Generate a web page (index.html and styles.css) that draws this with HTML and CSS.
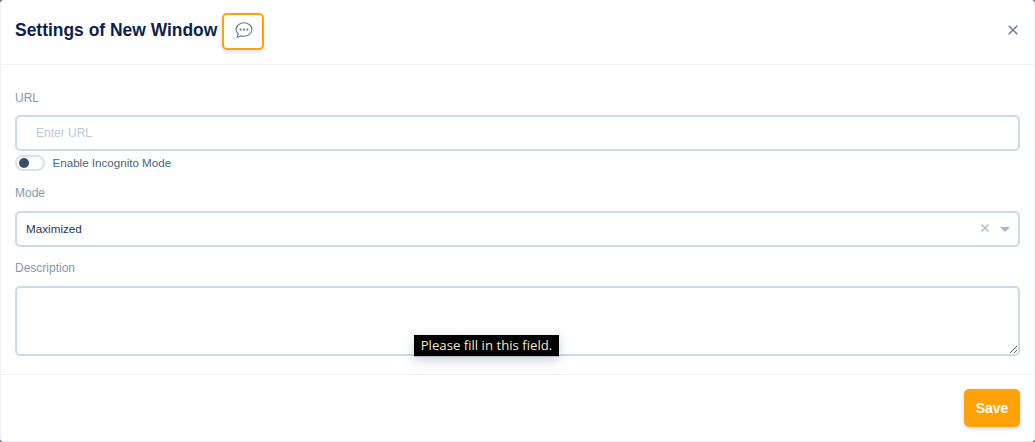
FILE: index.html
```html
<!DOCTYPE html>
<html lang="en">
<head>
  <meta charset="UTF-8">
  <title>Settings of New Window</title>
  <link rel="stylesheet" href="styles.css">
</head>
<body>
  <div class="modal">
    <div class="modal-header">
      <h2 class="modal-title">Settings of New Window</h2>
      <button class="help-button" type="button" aria-label="Comments">
        <svg width="18" height="18" viewBox="0 0 16 16" fill="none">
          <path d="M8 1.600c3.800 0 7 2.600 7 6s-3.200 6-7 6c-.9 0-1.700-.1-2.500-.4L2 14.400l.9-3.100C1.700 10.200 1 9 1 7.600c0-3.400 3.200-6 7-6z" stroke="#5f7f9c" stroke-width="1"/>
          <circle cx="5" cy="7.600" r="1" fill="#5f7f9c"/>
          <circle cx="8" cy="7.600" r="1" fill="#5f7f9c"/>
          <circle cx="11" cy="7.600" r="1" fill="#5f7f9c"/>
        </svg>
      </button>
      <button class="close-button" type="button" aria-label="Close">
        <svg width="10" height="10" viewBox="0 0 10 10">
          <path d="M.7.7l8.600 8.600M9.300.7L.7 9.300" stroke="#66809b" stroke-width="1.500"/>
        </svg>
      </button>
    </div>

    <div class="modal-body">
      <label class="field-label label-url">URL</label>
      <input class="text-input" type="text" placeholder="Enter URL">

      <div class="toggle-row">
        <span class="toggle"><span class="toggle-knob"></span></span>
        <span class="toggle-label">Enable Incognito Mode</span>
      </div>

      <label class="field-label label-mode">Mode</label>
      <div class="select-box">
        <span class="select-value">Maximized</span>
        <svg class="select-clear" width="8" height="8" viewBox="0 0 8 8">
          <path d="M.5.5l7 7M7.500.5l-7 7" stroke="#a5b8c9" stroke-width="1.200"/>
        </svg>
        <span class="select-caret"></span>
      </div>

      <label class="field-label label-desc">Description</label>
      <textarea class="text-area"></textarea>
    </div>

    <div class="modal-footer">
      <button class="save-button" type="button">Save</button>
    </div>

    <div class="native-tooltip">Please fill in this field.</div>
  </div>
</body>
</html>
```

FILE: styles.css
```css
:root {
  --navy: #0d1f4c;
  --muted: #829ab1;
  --text: #486581;
  --border: #c9dcea;
  --line: #eef2f7;
  --orange: #ffa20a;
}

html, body {
  margin: 0;
  height: 442px;
  overflow: hidden;
  background: #5b6b80;
}

body {
  font-family: "Liberation Sans", Arial, sans-serif;
  font-size: 12px;
  color: var(--navy);
}

.modal {
  position: relative;
  height: 442px;
  box-sizing: border-box;
  background: #fff;
  border-left: 1px solid #eef2f7;
  border-right: 1px solid #eef2f7;
  border-bottom: 1px solid #e6ebf2;
  border-radius: 4px;
}

.modal-header {
  display: flex;
  align-items: center;
  height: 65px;
  box-sizing: border-box;
  padding: 0 16px 2px 14px;
  border-bottom: 1px solid var(--line);
}

.modal-title {
  margin: -2px 0 0;
  font-size: 17.450px;
  font-weight: 700;
  color: var(--navy);
}

.help-button {
  display: flex;
  align-items: center;
  justify-content: center;
  width: 42px;
  height: 37px;
  margin-left: 5px;
  padding: 0 0 2px 1px;
  background: #fff;
  border: 2px solid var(--orange);
  border-radius: 5px;
  box-shadow: 0 2px 5px rgba(72, 101, 129, 0.2);
}

.close-button {
  display: flex;
  margin-left: auto;
  margin-top: -2px;
  padding: 0;
  background: none;
  border: none;
}

.modal-body {
  display: flex;
  flex-direction: column;
  height: 310px;
  box-sizing: border-box;
  padding: 0 14px;
  border-bottom: 1px solid var(--line);
}

.field-label {
  display: block;
  font-size: 12px;
  line-height: 14px;
  color: var(--muted);
}

.label-url {
  margin-top: 26px;
  margin-bottom: 10px;
}

.label-mode {
  margin-top: 15px;
  margin-bottom: 11px;
}

.label-desc {
  margin-top: 14px;
  margin-bottom: 11px;
}

.text-input {
  height: 36px;
  box-sizing: border-box;
  padding: 0 19px;
  font-family: inherit;
  font-size: 12px;
  background: #fff;
  border: 2px solid var(--border);
  border-radius: 5px;
  outline: none;
}

.text-input::placeholder {
  color: #bccbd9;
  opacity: 1;
}

.toggle-row {
  display: flex;
  align-items: center;
  gap: 7.500px;
  height: 16px;
  margin-top: 4px;
}

.toggle {
  display: flex;
  align-items: center;
  width: 30px;
  height: 16px;
  box-sizing: border-box;
  padding-left: 2px;
  border: 2px solid #d5e3ee;
  border-radius: 8px;
}

.toggle-knob {
  width: 10px;
  height: 10px;
  border-radius: 50%;
  background: #3e4c6a;
}

.toggle-label {
  margin-top: -1px;
  font-size: 11.600px;
  color: var(--text);
}

.select-box {
  display: flex;
  align-items: center;
  height: 36px;
  box-sizing: border-box;
  padding: 0 8px 0 9px;
  background: #fff;
  border: 2px solid var(--border);
  border-radius: 5px;
}

.select-value {
  flex: 1;
  margin-top: -1px;
  font-size: 11.700px;
  color: #243b5a;
}

.select-clear {
  margin-right: 11px;
  margin-top: -2px;
}

.select-caret {
  width: 0;
  height: 0;
  border-left: 5px solid transparent;
  border-right: 5px solid transparent;
  border-top: 5px solid #a5b8c9;
}

.text-area {
  display: block;
  height: 70px;
  box-sizing: border-box;
  background: #fff;
  border: 2px solid var(--border);
  border-radius: 5px;
  outline: none;
}

.modal-footer {
  display: flex;
  justify-content: flex-end;
  padding: 14px 14px 0 0;
}

.save-button {
  width: 56px;
  height: 38px;
  padding: 0;
  font-family: inherit;
  font-size: 14px;
  font-weight: 700;
  color: #fff;
  background: var(--orange);
  border: none;
  border-radius: 5px;
  box-shadow: 0 2px 5px rgba(72, 101, 129, 0.2);
}

/* browser validation bubble, sits over the textarea */
.native-tooltip {
  position: absolute;
  left: 413px;
  top: 335px;
  width: 145px;
  height: 22px;
  box-sizing: border-box;
  font-family: "Open Sans", sans-serif;
  font-size: 13.200px;
  line-height: 21px;
  text-align: center;
  white-space: nowrap;
  color: #f4e6cf;
  background: #000;
  border-bottom: 1px solid #bbb;
  box-shadow: 0 3px 12px rgba(72, 101, 129, 0.3);
}
```
